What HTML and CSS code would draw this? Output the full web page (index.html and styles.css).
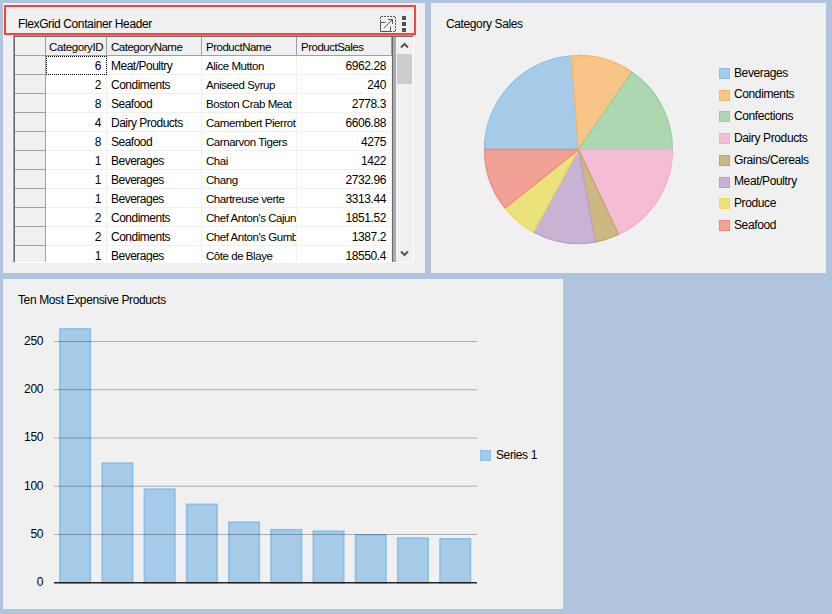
FILE: index.html
```html
<!DOCTYPE html>
<html>
<head>
<meta charset="utf-8">
<title>Dashboard</title>
<link rel="stylesheet" href="styles.css">
</head>
<body>
  <div class="dashboard">

    <div class="row">
      <div class="panel panel-grid">
        <div class="header">
          <span class="caption">FlexGrid Container Header</span>
          <svg class="icon-expand" width="17" height="17" viewBox="0 0 17 17">
            <path class="dash" d="M0.5 6V0.5H15.5V15.5H10"/>
            <path d="M5.5 6.5H0.5V15.5H10.5V10.5M4 12L12.5 3.5M8 3.5H12.5V8"/>
          </svg>
          <span class="icon-menu"><i></i><i></i><i></i></span>
        </div>
        <div class="grid">
          <table>
            <tr><th class="rh"></th><th class="id">CategoryID</th><th class="name">CategoryName</th><th class="prod">ProductName</th><th class="sales">ProductSales</th></tr>
            <tr><th></th><td class="num current">6</td><td>Meat/Poultry</td><td class="product">Alice Mutton</td><td class="num">6962.28</td></tr>
            <tr><th></th><td class="num">2</td><td>Condiments</td><td class="product">Aniseed Syrup</td><td class="num">240</td></tr>
            <tr><th></th><td class="num">8</td><td>Seafood</td><td class="product">Boston Crab Meat</td><td class="num">2778.3</td></tr>
            <tr><th></th><td class="num">4</td><td>Dairy Products</td><td class="product">Camembert Pierrot</td><td class="num">6606.88</td></tr>
            <tr><th></th><td class="num">8</td><td>Seafood</td><td class="product">Carnarvon Tigers</td><td class="num">4275</td></tr>
            <tr><th></th><td class="num">1</td><td>Beverages</td><td class="product">Chai</td><td class="num">1422</td></tr>
            <tr><th></th><td class="num">1</td><td>Beverages</td><td class="product">Chang</td><td class="num">2732.96</td></tr>
            <tr><th></th><td class="num">1</td><td>Beverages</td><td class="product">Chartreuse verte</td><td class="num">3313.44</td></tr>
            <tr><th></th><td class="num">2</td><td>Condiments</td><td class="product">Chef Anton's Cajun</td><td class="num">1851.52</td></tr>
            <tr><th></th><td class="num">2</td><td>Condiments</td><td class="product">Chef Anton's Gumb</td><td class="num">1387.2</td></tr>
            <tr><th></th><td class="num">1</td><td>Beverages</td><td class="product">Côte de Blaye</td><td class="num">18550.4</td></tr>
          </table>
          <div class="edge"></div>
          <div class="scrollbar">
            <svg width="9" height="7" viewBox="0 0 9 7"><path d="M1 5.5L4.5 2L8 5.5"/></svg>
            <div class="thumb"></div>
            <svg width="9" height="7" viewBox="0 0 9 7"><path d="M1 1.5L4.5 5L8 1.5"/></svg>
          </div>
        </div>
        <div class="marker"></div>
      </div>

      <div class="panel panel-pie">
        <div class="header"><span class="caption">Category Sales</span></div>
        <div class="chart">
          <svg class="pie" width="192" height="192" viewBox="-95.5 -95.5 192 192">
            <path class="c1" d="M0 0L-94 0A94 94 0 0 1 -7 -93.7Z"/>
            <path class="c2" d="M0 0L-7 -93.7A94 94 0 0 1 53.3 -77.4Z"/>
            <path class="c3" d="M0 0L53.3 -77.4A94 94 0 0 1 94 0Z"/>
            <path class="c4" d="M0 0L94 0A94 94 0 0 1 40 85Z"/>
            <path class="c5" d="M0 0L40 85A94 94 0 0 1 16.6 92.5Z"/>
            <path class="c6" d="M0 0L16.6 92.5A94 94 0 0 1 -45.2 82.4Z"/>
            <path class="c7" d="M0 0L-45.2 82.4A94 94 0 0 1 -73.5 58.6Z"/>
            <path class="c8" d="M0 0L-73.5 58.6A94 94 0 0 1 -94 0Z"/>
          </svg>
          <div class="legend">
            <div><i class="b1"></i><span>Beverages</span></div>
            <div><i class="b2"></i><span>Condiments</span></div>
            <div><i class="b3"></i><span>Confections</span></div>
            <div><i class="b4"></i><span>Dairy Products</span></div>
            <div><i class="b5"></i><span>Grains/Cereals</span></div>
            <div><i class="b6"></i><span>Meat/Poultry</span></div>
            <div><i class="b7"></i><span>Produce</span></div>
            <div><i class="b8"></i><span>Seafood</span></div>
          </div>
        </div>
      </div>
    </div>

    <div class="panel panel-bars">
      <div class="header"><span class="caption">Ten Most Expensive Products</span></div>
      <div class="chart">
        <svg class="bars" width="460" height="280" viewBox="18 320 460 280">
          <g class="labels">
            <text x="43" y="345">250</text>
            <text x="43" y="393">200</text>
            <text x="43" y="441">150</text>
            <text x="43" y="490">100</text>
            <text x="43" y="538">50</text>
            <text x="43" y="586">0</text>
          </g>
          <g class="bar">
            <rect x="60" y="329" width="30.3" height="253.7"/>
            <rect x="102.3" y="463.2" width="30.3" height="119.5"/>
            <rect x="144.5" y="489.2" width="30.3" height="93.5"/>
            <rect x="186.7" y="504.4" width="30.3" height="78.3"/>
            <rect x="228.9" y="522.3" width="30.3" height="60.4"/>
            <rect x="271.1" y="529.8" width="30.3" height="52.9"/>
            <rect x="313.4" y="531.3" width="30.3" height="51.4"/>
            <rect x="355.6" y="535" width="30.3" height="47.7"/>
            <rect x="397.8" y="538.2" width="30.3" height="44.5"/>
            <rect x="440.1" y="538.9" width="30.3" height="43.8"/>
          </g>
          <path class="lines" d="M54 341.5H477M54 389.7H477M54 438H477M54 486.2H477M54 534.5H477"/>
          <path class="axis" d="M54 582.7H477"/>
        </svg>
        <div class="legend"><div><i class="b1"></i><span>Series 1</span></div></div>
      </div>
    </div>

  </div>
</body>
</html>
```
FILE: styles.css
```css
body {
  margin: 0;
  background: #b0c4de;
  font: 12px/19px "Liberation Sans", Arial, sans-serif;
  letter-spacing: -0.38px;
  color: #000;
}

.dashboard {
  display: flex;
  flex-direction: column;
  gap: 6px;
  padding: 3px;
}

.row {
  display: flex;
  gap: 6px;
}

.panel {
  position: relative;
  box-sizing: border-box;
  background: #f0f0f0;
}
.panel-grid { width: 422px; height: 270px; }
.panel-pie { width: 395px; height: 270px; }
.panel-bars { width: 560px; height: 330px; }

.header {
  display: flex;
  height: 32px;
  box-sizing: border-box;
  padding: 12px 0 0 15px;
}
.caption { width: 362px; white-space: nowrap; }

/* container header buttons */
.icon-expand {
  margin-top: 1px;
  fill: none;
  stroke: #555;
}
.icon-expand .dash { stroke-dasharray: 2 1; }
.icon-menu {
  display: flex;
  flex-direction: column;
  gap: 2px;
  margin: 1px 0 0 5px;
}
.icon-menu i {
  width: 4px;
  height: 4px;
  background: #505050;
}

/* red frame drawn over the header */
.marker {
  position: absolute;
  left: 1px;
  top: 2px;
  width: 408px;
  height: 26px;
  border: 2px solid #fc4040;
}

/* grid */
.grid {
  display: flex;
  box-sizing: border-box;
  width: 401px;
  height: 228px;
  margin-left: 10px;
  overflow: hidden;
  border: 1px solid #a0a0a0;
  border-right-color: #fff;
  border-bottom-color: #fff;
  box-shadow: inset 1px 1px #696969;
  padding: 1px 0 0 1px;
}
.grid table {
  flex: none;
  width: 377px;
  table-layout: fixed;
  border-collapse: separate;
  border-spacing: 0;
  background: #fff;
}
.grid tr { height: 19px; }
.grid th, .grid td {
  box-sizing: border-box;
  height: 19px;
  padding: 2px 0 0 4px;
  line-height: 16px;
  font-weight: normal;
  text-align: left;
  white-space: nowrap;
  overflow: hidden;
  border-right: 1px solid #f0f0f0;
  border-bottom: 1px solid #f0f0f0;
}
.grid td { letter-spacing: -0.5px; }
.grid th {
  background: #f0f0f0;
  border-color: #a0a0a0;
  font-size: 11.5px;
  letter-spacing: -0.5px;
}
.grid th.id { padding-left: 3px; letter-spacing: -0.4px; }
.grid td.product { font-size: 11.5px; letter-spacing: -0.45px; }
.grid td.num { text-align: right; padding-right: 5px; padding-left: 0; letter-spacing: -0.4px; }
.grid td.current { outline: 1px dotted #000; outline-offset: -1px; }
.rh { width: 31px; }
.id { width: 61px; }
.name, .prod, .sales { width: 95px; }

.edge {
  flex: none;
  width: 3px;
  background: #aaa;
  border-left: 1px solid #696969;
}
.scrollbar {
  display: flex;
  flex-direction: column;
  align-items: center;
  flex: none;
  width: 17px;
  background: #f0f0f0;
}
.scrollbar svg {
  margin: 5px 0;
  fill: none;
  stroke: #555;
  stroke-width: 2;
}
.thumb { width: 15px; height: 30px; background: #cdcdcd; }
.scrollbar svg:last-child { margin-top: auto; }

/* charts */
.chart { display: flex; }

.pie { margin: 19px 0 0 52px; }
.pie path { stroke-width: 1.3; stroke-linejoin: round; }
.c1, .b1 { fill: #a6cbe9; background: #a6cbe9; stroke: #8cc0e8; border-color: #8cc0e8; }
.c2, .b2 { fill: #f8c487; background: #f8c487; stroke: #f9b763; border-color: #f9b763; }
.c3, .b3 { fill: #acd7b1; background: #acd7b1; stroke: #98d09f; border-color: #98d09f; }
.c4, .b4 { fill: #f4bdd5; background: #f4bdd5; stroke: #f4afcc; border-color: #f4afcc; }
.c5, .b5 { fill: #ccb881; background: #ccb881; stroke: #c3a75e; border-color: #c3a75e; }
.c6, .b6 { fill: #c9b3d4; background: #c9b3d4; stroke: #bd9fcb; border-color: #bd9fcb; }
.c7, .b7 { fill: #ece27b; background: #ece27b; stroke: #e9dc5b; border-color: #e9dc5b; }
.c8, .b8 { fill: #f1a196; background: #f1a196; stroke: #f1897b; border-color: #f1897b; }

.legend { line-height: 21.75px; }
.legend div { display: flex; align-items: center; height: 21.75px; white-space: nowrap; }
.legend i {
  box-sizing: border-box;
  width: 11px;
  height: 11px;
  margin-right: 4px;
  border-width: 1px;
  border-style: solid;
}
.panel-pie .legend { margin: 27.6px 0 0 44px; }

.bars { margin: 9px 0 0 15px; }
.bar { fill: #a6cbe9; stroke: #8cc0e8; stroke-width: 1.8; }
.labels { text-anchor: end; }
.lines { stroke: #000; stroke-opacity: .28; fill: none; }
.axis { stroke: #222; stroke-width: 1.4; }
.panel-bars .legend { margin: 134px 0 0 2px; }
.panel-bars .legend i { margin-right: 5px; }
```
